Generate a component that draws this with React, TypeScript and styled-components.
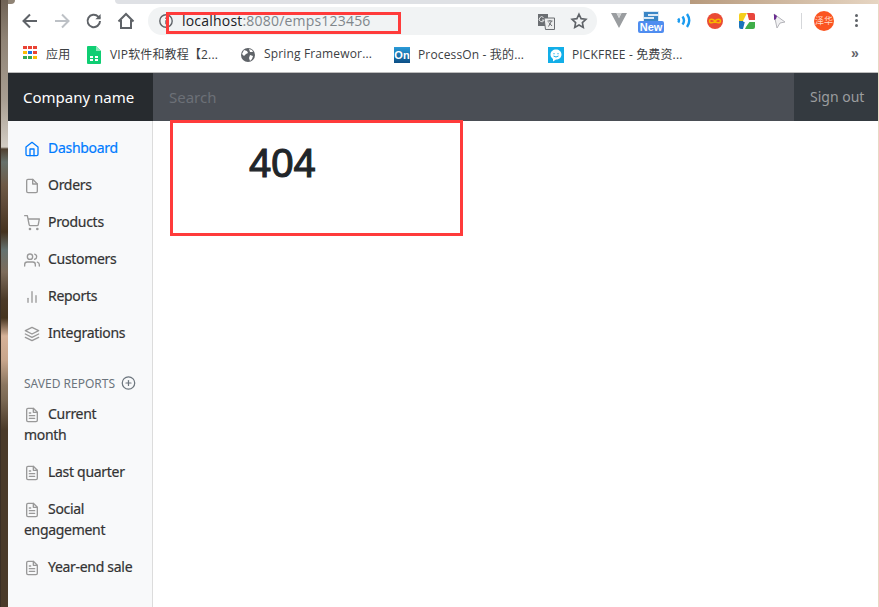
import React from 'react';
import styled, { createGlobalStyle } from 'styled-components';

const GlobalStyle = createGlobalStyle`
  html, body {
    margin: 0;
    padding: 0;
    height: 100%;
    overflow: hidden;
    background: #fff;
  }
  #root {
    height: 100%;
  }
`;

const UI_FONT = `"Open Sans", "Noto Sans CJK SC", sans-serif`;
const PAGE_FONT = `"Noto Sans", "Noto Sans CJK SC", sans-serif`;

const mainLinks = [
  { label: 'Dashboard', icon: 'home', active: true },
  { label: 'Orders', icon: 'file' },
  { label: 'Products', icon: 'cart' },
  { label: 'Customers', icon: 'users' },
  { label: 'Reports', icon: 'chart' },
  { label: 'Integrations', icon: 'layers' },
];

const savedLinks = ['Current month', 'Last quarter', 'Social engagement', 'Year-end sale'];

function Feather({ name }: { name: string }) {
  return (
    <FeatherSvg viewBox="0 0 24 24">
      {name === 'home' && (
        <>
          <path d="M3 9l9-7 9 7v11a2 2 0 0 1-2 2H5a2 2 0 0 1-2-2z" />
          <polyline points="9 22 9 12 15 12 15 22" />
        </>
      )}
      {name === 'file' && (
        <>
          <path d="M13 2H6a2 2 0 0 0-2 2v16a2 2 0 0 0 2 2h12a2 2 0 0 0 2-2V9z" />
          <polyline points="13 2 13 9 20 9" />
        </>
      )}
      {name === 'cart' && (
        <>
          <circle cx="9" cy="21" r="1" />
          <circle cx="20" cy="21" r="1" />
          <path d="M1 1h4l2.68 13.39a2 2 0 0 0 2 1.61h9.72a2 2 0 0 0 2-1.61L23 6H6" />
        </>
      )}
      {name === 'users' && (
        <>
          <path d="M17 21v-2a4 4 0 0 0-4-4H5a4 4 0 0 0-4 4v2" />
          <circle cx="9" cy="7" r="4" />
          <path d="M23 21v-2a4 4 0 0 0-3-3.87" />
          <path d="M16 3.13a4 4 0 0 1 0 7.75" />
        </>
      )}
      {name === 'chart' && (
        <>
          <line x1="18" y1="20" x2="18" y2="10" />
          <line x1="12" y1="20" x2="12" y2="4" />
          <line x1="6" y1="20" x2="6" y2="14" />
        </>
      )}
      {name === 'layers' && (
        <>
          <polygon points="12 2 2 7 12 12 22 7 12 2" />
          <polyline points="2 17 12 22 22 17" />
          <polyline points="2 12 12 17 22 12" />
        </>
      )}
      {name === 'plus' && (
        <>
          <circle cx="12" cy="12" r="10" />
          <line x1="12" y1="8" x2="12" y2="16" />
          <line x1="8" y1="12" x2="16" y2="12" />
        </>
      )}
      {name === 'text' && (
        <>
          <path d="M14 2H6a2 2 0 0 0-2 2v16a2 2 0 0 0 2 2h12a2 2 0 0 0 2-2V8z" />
          <polyline points="14 2 14 8 20 8" />
          <line x1="16" y1="13" x2="8" y2="13" />
          <line x1="16" y1="17" x2="8" y2="17" />
          <polyline points="10 9 9 9 8 9" />
        </>
      )}
    </FeatherSvg>
  );
}

function ChromeToolbar() {
  return (
    <Toolbar>
      <NavButton>
        <svg width="20" height="20" viewBox="0 0 20 20" fill="none" stroke="#5f6368" strokeWidth="2">
          <path d="M17 10H4M10 3.5L3.5 10l6.5 6.5" />
        </svg>
      </NavButton>
      <NavButton>
        <svg width="20" height="20" viewBox="0 0 20 20" fill="none" stroke="#bdc1c6" strokeWidth="2">
          <path d="M3 10h13M10 3.5l6.5 6.5-6.5 6.5" />
        </svg>
      </NavButton>
      <NavButton>
        <svg width="20" height="20" viewBox="0 0 20 20" fill="none" stroke="#5f6368" strokeWidth="2">
          <path d="M16 10a6.2 6.2 0 1 1-1.8-4.4L16 7.4" />
          <path d="M16.6 3v5.2h-5.2z" fill="#5f6368" stroke="none" />
        </svg>
      </NavButton>
      <NavButton>
        <svg width="20" height="20" viewBox="0 0 20 20" fill="none" stroke="#5f6368" strokeWidth="2">
          <path d="M2.5 10.5L10 3l7.5 7.5M5 9v8h10V9" />
        </svg>
      </NavButton>
      <Omnibox>
        <svg width="16" height="16" viewBox="0 0 16 16" fill="none" stroke="#5f6368" strokeWidth="1.4">
          <circle cx="8" cy="8" r="6.2" />
          <path d="M8 7.2v4M8 4.6V6" />
        </svg>
        <Url>
          localhost<UrlRest>:8080/emps123456</UrlRest>
        </Url>
        <OmniActions>
          <svg width="17" height="17" viewBox="0 0 17 17">
            <path d="M0 1h10v12H0z" fill="#6b6e72" />
            <path d="M6 5h10.5v11.5H7.5z" fill="#eceded" stroke="#6b6e72" />
            <path d="M5.500 4.500a2.500 2.500 0 1 0 .6 2.600H4" stroke="#e6e7e8" fill="none" />
            <path d="M9.500 8h5M12 7v1M10.500 13.500l3-5.500M10.800 9.500l3.200 3.500" stroke="#6b6e72" fill="none" />
          </svg>
          <svg width="18" height="18" viewBox="0 0 24 24" fill="none" stroke="#5f6368" strokeWidth="2.2">
            <path d="M12 3l2.8 5.900 6.400.8-4.700 4.400 1.200 6.400-5.700-3.100-5.700 3.100 1.200-6.400-4.700-4.400 6.400-.8z" />
          </svg>
        </OmniActions>
      </Omnibox>
      <Extensions>
        <ExtSlot $width={27}>
          <svg width="16" height="15" viewBox="0 0 16 15">
            <path d="M0 0h5.500L8 5l2.500-5H16L8 15z" fill="#9a9da0" />
            <path d="M5.500 0h5L8 5z" fill="#d0d2d3" />
          </svg>
        </ExtSlot>
        <ExtSlot $width={39}>
          <ExtNewIcon>
            <svg width="16" height="11" viewBox="0 0 16 11">
              <path d="M0 0h16v11H0z" fill="#dbe9f6" />
              <path d="M1 1h14v2H5v2h10v5H1V8h10V6H1z" fill="#3b86c6" />
            </svg>
            <NewBadge>New</NewBadge>
          </ExtNewIcon>
        </ExtSlot>
        <ExtSlot $width={30}>
          <svg width="14" height="17" viewBox="0 0 14 17" fill="none" stroke="#1a9bf0" strokeWidth="2.4">
            <path d="M1.2 6.500q1.500 2 0 4M5.500 4.500q3 4 0 8M10 2q4.500 6.500 0 13" />
          </svg>
        </ExtSlot>
        <ExtSlot $width={32}>
          <svg width="16" height="16" viewBox="0 0 16 16">
            <circle cx="8" cy="8" r="8" fill="#ea4b35" />
            <path d="M8 8c-1.800-2.400-5.500-2.400-5.500 0s3.700 2.400 5.500 0c1.800-2.400 5.500-2.400 5.500 0s-3.700 2.400-5.500 0z" fill="none" stroke="#f7b500" strokeWidth="1.5" />
          </svg>
        </ExtSlot>
        <ExtSlot $width={32}>
          <svg width="16" height="16" viewBox="0 0 16 16">
            <path d="M0 2a2 2 0 0 1 2-2h6L4 8H0z" fill="#f5cf1d" />
            <path d="M8 0h6a2 2 0 0 1 2 2v5h-6z" fill="#e8453c" />
            <path d="M0 8h6l-2 8H2a2 2 0 0 1-2-2z" fill="#1b75bb" />
            <path d="M9 9h7v5a2 2 0 0 1-2 2H6z" fill="#3fae49" />
            <path d="M9 1L4 9h3.500L6 15l6-8H8.500z" fill="#fff" />
          </svg>
        </ExtSlot>
        <ExtSlot $width={30}>
          <svg width="16" height="16" viewBox="0 0 16 16">
            <path d="M3 1l11 8-5 1-3 5z" fill="#f1f1f3" stroke="#b5b5ba" />
            <path d="M3 1l3 2-1 3-2 1z" fill="#6a2c91" />
          </svg>
        </ExtSlot>
        <ToolbarDivider />
        <Avatar>泽华</Avatar>
        <MenuDots>
          <i />
          <i />
          <i />
        </MenuDots>
      </Extensions>
    </Toolbar>
  );
}

function BookmarksBar() {
  return (
    <Bookmarks>
      <Bookmark $width={64}>
        <AppsGrid>
          {['#ea4335', '#ea4335', '#ea4335', '#fbbc05', '#1a73e8', '#ea4335', '#34a853', '#34a853', '#fbbc05'].map((color, index) => (
            <AppsDot key={index} $color={color} />
          ))}
        </AppsGrid>
        <BookmarkLabel $gap={9}>应用</BookmarkLabel>
      </Bookmark>
      <Bookmark $width={154}>
        <svg width="14" height="18" viewBox="0 0 14 18">
          <path d="M1 0h8l5 5v12a1 1 0 0 1-1 1H1a1 1 0 0 1-1-1V1a1 1 0 0 1 1-1z" fill="#0fce73" />
          <path d="M9 0l5 5H9z" fill="#8eeabb" />
          <path d="M3 10h3v2H3zM8 10h3v2H8zM3 13h3v2H3zM8 13h3v2H8z" fill="#fff" />
        </svg>
        <BookmarkLabel $gap={9}>VIP软件和教程【2...</BookmarkLabel>
      </Bookmark>
      <Bookmark $width={153}>
        <svg width="14" height="14" viewBox="0 0 14 14">
          <circle cx="7" cy="7" r="7" fill="#5f6368" />
          <path d="M3 2l3 1 1 2-2 1-2 2-2-2zM9 7l3 1-1 3-2 2-1-3zM8 1l3 1 1 2-3 0z" fill="#fff" />
        </svg>
        <BookmarkLabel $gap={9}>Spring Framewor...</BookmarkLabel>
      </Bookmark>
      <Bookmark $width={154}>
        <OnIcon>On</OnIcon>
        <BookmarkLabel $gap={8}>ProcessOn - 我的...</BookmarkLabel>
      </Bookmark>
      <Bookmark $width={292}>
        <svg width="16" height="16" viewBox="0 0 16 16">
          <path d="M0 0h16v16H0z" fill="#12aee8" />
          <path d="M8 2.500c3 0 5.500 2 5.500 5s-2.500 5-5.500 5l-3 2v-2.600C3.500 11 2.500 9.500 2.500 7.500c0-3 2.500-5 5.500-5z" fill="#fff" />
          <path d="M6 6v1.300M10 6v1.300M5.500 9q2.500 2 5 0" stroke="#12aee8" fill="none" />
        </svg>
        <BookmarkLabel $gap={8}>PICKFREE - 免费资...</BookmarkLabel>
      </Bookmark>
      <MoreChevron>»</MoreChevron>
    </Bookmarks>
  );
}

export default function App() {
  return (
    <>
      <GlobalStyle />
      <Desktop>
        <WallpaperEdge />
        <BrowserWindow>
          <TabStrip>
            <TabCorner />
            <TabGap />
            <ActiveTab />
            <WallpaperPeek />
          </TabStrip>
          <ChromeToolbar />
          <BookmarksBar />
          <Navbar>
            <Brand>Company name</Brand>
            <SearchInput placeholder="Search" />
            <SignOut>Sign out</SignOut>
          </Navbar>
          <Body>
            <Sidebar>
              <NavList>
                {mainLinks.map((link) => (
                  <NavItem key={link.label} $active={link.active}>
                    <Feather name={link.icon} />
                    {link.label}
                  </NavItem>
                ))}
              </NavList>
              <SavedHeading>
                Saved reports
                <Feather name="plus" />
              </SavedHeading>
              <NavList>
                {savedLinks.map((label) => (
                  <NavItem key={label}>
                    <Feather name="text" />
                    {label}
                  </NavItem>
                ))}
              </NavList>
            </Sidebar>
            <Main>
              <Title>404</Title>
            </Main>
          </Body>
        </BrowserWindow>
        <RightEdge />
      </Desktop>
      <UrlHighlight />
      <TitleHighlight />
    </>
  );
}

const Desktop = styled.div`
  display: flex;
  width: 879px;
  height: 607px;
  overflow: hidden;
`;

const WallpaperEdge = styled.div`
  width: 7px;
  flex: none;
  border-left: 1px solid #3b2f25;
  background: linear-gradient(
    to bottom,
    #6f6255 0,
    #8f8375 40px,
    #a89e92 100px,
    #d2ccc3 146px,
    #d2ccc3 147px,
    #4f4030 149px,
    #66706a 162px,
    #6e5a46 185px,
    #5e4a38 205px,
    #45331f 232px,
    #647270 250px,
    #7c6b5a 272px,
    #4b3a28 300px,
    #46341f 318px,
    #d6b298 336px,
    #c8a68c 360px,
    #8a7660 385px,
    #7a6853 400px,
    #4a3a29 430px,
    #4a3a29 607px
  );
`;

const RightEdge = styled.div`
  width: 1px;
  flex: none;
  background: #e9d8c4;
`;

const BrowserWindow = styled.div`
  display: flex;
  flex-direction: column;
  width: 870px;
  flex: none;
`;

const TabStrip = styled.div`
  display: flex;
  height: 4px;
  flex: none;
  background: #fff;
`;

const TabCorner = styled.div`
  width: 7px;
  background: #8f8375;
  border-bottom-right-radius: 4px;
`;

const TabGap = styled.div`
  width: 100px;
`;

const ActiveTab = styled.div`
  width: 575px;
  background: #dfe1e5;
  border-bottom-left-radius: 4px;
`;

const WallpaperPeek = styled.div`
  flex: 1;
  background: linear-gradient(to right, #b79a7d, #e6d5c2);
`;

const Toolbar = styled.div`
  display: flex;
  align-items: center;
  height: 33px;
  flex: none;
  background: #fff;
  padding-left: 6px;
`;

const NavButton = styled.div`
  display: flex;
  align-items: center;
  justify-content: center;
  width: 32px;
  height: 28px;
  flex: none;
`;

const Omnibox = styled.div`
  display: flex;
  align-items: center;
  width: 449px;
  height: 28px;
  margin-left: 6px;
  margin-top: 1px;
  padding-left: 10px;
  box-sizing: border-box;
  flex: none;
  border-radius: 14px;
  background: #f1f3f4;
`;

const Url = styled.span`
  margin-left: 8px;
  padding-bottom: 2px;
  font-family: ${UI_FONT};
  font-size: 14px;
  letter-spacing: 0.2px;
  color: #202124;
  white-space: nowrap;
`;

const UrlRest = styled.span`
  color: #80868b;
`;

const OmniActions = styled.div`
  display: flex;
  align-items: center;
  gap: 15px;
  margin-left: auto;
  margin-right: 9px;
`;

const Extensions = styled.div`
  display: flex;
  align-items: center;
  margin-left: 14px;
`;

const ExtSlot = styled.div<{ $width: number }>`
  display: flex;
  align-items: center;
  justify-content: flex-start;
  width: ${(props) => props.$width}px;
  flex: none;
`;

const ExtNewIcon = styled.div`
  position: relative;
  width: 26px;
  height: 22px;
  margin-top: 3px;
  display: flex;
  justify-content: center;
  box-sizing: border-box;
`;

const NewBadge = styled.span`
  position: absolute;
  left: 0;
  bottom: 0;
  width: 26px;
  height: 12px;
  border-radius: 2px;
  background: #4f8df0;
  color: #fff;
  font-family: "Liberation Sans", sans-serif;
  font-size: 11px;
  font-weight: 700;
  line-height: 12px;
  text-align: center;
`;

const ToolbarDivider = styled.div`
  width: 1px;
  height: 16px;
  flex: none;
  background: #d5d7da;
`;

const Avatar = styled.div`
  width: 20px;
  height: 20px;
  flex: none;
  margin-left: 12px;
  border-radius: 50%;
  background: #fb5420;
  color: #ffd9c7;
  font-family: "Noto Sans CJK SC", sans-serif;
  font-size: 9px;
  line-height: 20px;
  text-align: center;
`;

const MenuDots = styled.div`
  display: flex;
  flex-direction: column;
  gap: 2px;
  margin-left: 21px;

  i {
    display: block;
    width: 3px;
    height: 3px;
    border-radius: 50%;
    background: #5f6368;
  }
`;

const Bookmarks = styled.div`
  display: flex;
  align-items: center;
  height: 35px;
  flex: none;
  padding-left: 15px;
  background: #fff;
  border-bottom: 1px solid #bdbdbd;
  box-sizing: content-box;
`;

const Bookmark = styled.div<{ $width: number }>`
  display: flex;
  align-items: center;
  width: ${(props) => props.$width}px;
  flex: none;
`;

const BookmarkLabel = styled.span<{ $gap: number }>`
  margin-left: ${(props) => props.$gap}px;
  padding-bottom: 2px;
  font-family: ${UI_FONT};
  font-size: 12px;
  letter-spacing: 0.15px;
  color: #3c4043;
  white-space: nowrap;
`;

const AppsGrid = styled.div`
  display: grid;
  grid-template-columns: repeat(3, 4px);
  grid-auto-rows: 3px;
  gap: 2px 1px;
  padding-bottom: 4px;
`;

const AppsDot = styled.span<{ $color: string }>`
  background: ${(props) => props.$color};
`;

const OnIcon = styled.span`
  width: 16px;
  height: 16px;
  flex: none;
  background: linear-gradient(to bottom, #2a9bd8, #0d4f86);
  color: #fff;
  font-family: "Liberation Sans", sans-serif;
  font-size: 11px;
  font-weight: 700;
  line-height: 16px;
  text-align: center;
`;

const MoreChevron = styled.span`
  margin-left: 11px;
  padding-bottom: 3px;
  font-family: "Liberation Sans", sans-serif;
  font-size: 14px;
  font-weight: 700;
  color: #5f6368;
`;

const Navbar = styled.div`
  display: flex;
  height: 48px;
  flex: none;
  background: #4a4e55;
  font-family: ${PAGE_FONT};
`;

const Brand = styled.div`
  width: 145px;
  flex: none;
  padding-left: 15px;
  box-sizing: border-box;
  background: #272b2f;
  color: #fff;
  font-size: 15px;
  line-height: 48px;
`;

const SearchInput = styled.input`
  flex: 1;
  min-width: 0;
  padding: 0 16px;
  border: 0;
  outline: none;
  background: transparent;
  font-family: ${PAGE_FONT};
  font-size: 15px;

  &::placeholder {
    color: #6c7077;
    opacity: 1;
  }
`;

const SignOut = styled.div`
  width: 84px;
  flex: none;
  padding-left: 16px;
  box-sizing: border-box;
  background: #343a40;
  color: #9b9d9f;
  font-size: 14px;
  line-height: 48px;
`;

const Body = styled.div`
  display: flex;
  flex: 1;
  min-height: 0;
`;

const Sidebar = styled.nav`
  width: 145px;
  flex: none;
  padding-top: 8px;
  box-sizing: border-box;
  background: #f8f9fa;
  border-right: 1px solid #dcdcdc;
  font-family: ${PAGE_FONT};
`;

const NavList = styled.ul`
  margin: 0;
  padding: 0;
  list-style: none;
`;

const FeatherSvg = styled.svg`
  width: 16px;
  height: 16px;
  margin-right: 8px;
  vertical-align: text-bottom;
  fill: none;
  stroke: currentColor;
  stroke-width: 2;
  stroke-linecap: round;
  stroke-linejoin: round;
`;

const NavItem = styled.li<{ $active?: boolean }>`
  padding: 8px 14px 8px 16px;
  font-size: 14px;
  line-height: 21px;
  font-weight: 400;
  letter-spacing: -0.3px;
  -webkit-text-stroke: 0.2px currentColor;
  color: ${(props) => (props.$active ? '#007bff' : '#333')};

  ${FeatherSvg} {
    color: ${(props) => (props.$active ? '#007bff' : '#999')};
  }
`;

const SavedHeading = styled.h6`
  display: flex;
  align-items: center;
  margin: 23px 0 3px;
  padding: 0 16px;
  height: 18px;
  font-size: 12px;
  font-weight: 400;
  text-transform: uppercase;
  color: #6c757d;
  white-space: nowrap;

  ${FeatherSvg} {
    margin: 0 0 0 6px;
    color: #6c757d;
  }
`;

const Main = styled.main`
  flex: 1;
  padding: 18px 0 0 96px;
  background: #fff;
`;

const Title = styled.h1`
  margin: 0;
  font-family: "Liberation Sans", sans-serif;
  font-size: 40px;
  font-weight: 400;
  line-height: 48px;
  -webkit-text-stroke: 1.1px #212529;
  color: #212529;
`;

const UrlHighlight = styled.div`
  position: absolute;
  left: 166px;
  top: 12px;
  width: 235px;
  height: 22px;
  box-sizing: border-box;
  border: 3px solid #ff3b3b;
`;

const TitleHighlight = styled.div`
  position: absolute;
  left: 170px;
  top: 120px;
  width: 293px;
  height: 116px;
  box-sizing: border-box;
  border: 3px solid #ff3b3b;
`;
